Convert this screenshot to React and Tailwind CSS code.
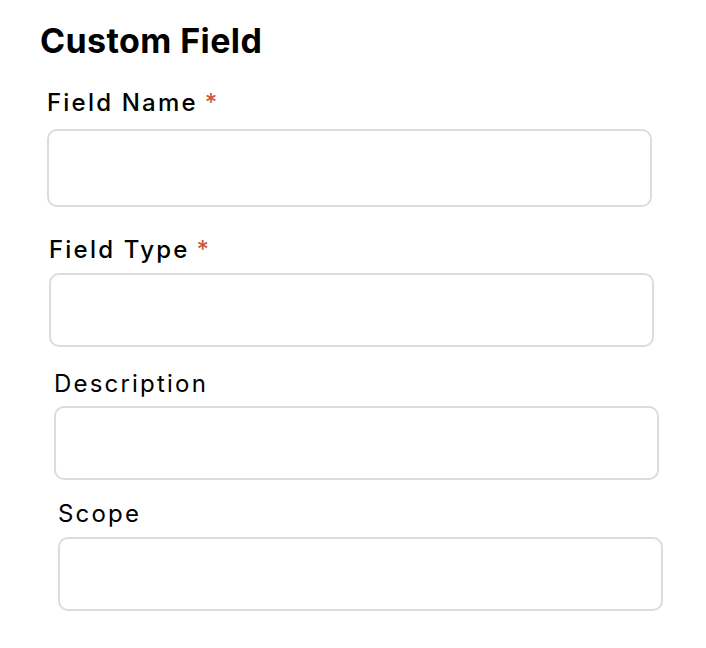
import React from 'react';

const fields = [
  { label: 'Field Name', required: true, ml: 'ml-[47px]', mt: 'mt-[28px]', gap: 'mt-[12px]', h: 'h-[78px]', weight: 'font-medium' },
  { label: 'Field Type', required: true, ml: 'ml-[49px]', mt: 'mt-[29px]', gap: 'mt-[9px]', h: 'h-[74px]', weight: 'font-medium' },
  { label: 'Description', required: false, ml: 'ml-[54px]', mt: 'mt-[23px]', gap: 'mt-[8px]', h: 'h-[74px]', weight: 'font-normal' },
  { label: 'Scope', required: false, ml: 'ml-[58px]', mt: 'mt-[20px]', gap: 'mt-[9px]', h: 'h-[74px]', weight: 'font-normal' },
];

function Field({ field }) {
  return (
    <div className={`${field.ml} ${field.mt} w-[605px]`}>
      <label className={`block text-[24px] leading-[28px] tracking-[2.2px] text-black ${field.weight}`}>
        {field.label}
        {field.required && <span className="ml-[7px] text-[#cc5a3c]">*</span>}
      </label>
      <input
        type="text"
        className={`block w-full ${field.gap} ${field.h} rounded-[10px] border-2 border-[#dcdcdc] bg-white px-4 outline-none`}
      />
    </div>
  );
}

export default function App() {
  return (
    <div
      className="min-h-[648px] w-[706px] bg-white pt-[21px]"
      style={{ fontFamily: 'Inter, "Noto Sans", sans-serif' }}
    >
      <h1 className="ml-[40px] text-[34px] font-bold leading-[40px] tracking-[0.4px] text-black">Custom Field</h1>
      {fields.map((f) => (
        <Field key={f.label} field={f} />
      ))}
    </div>
  );
}
